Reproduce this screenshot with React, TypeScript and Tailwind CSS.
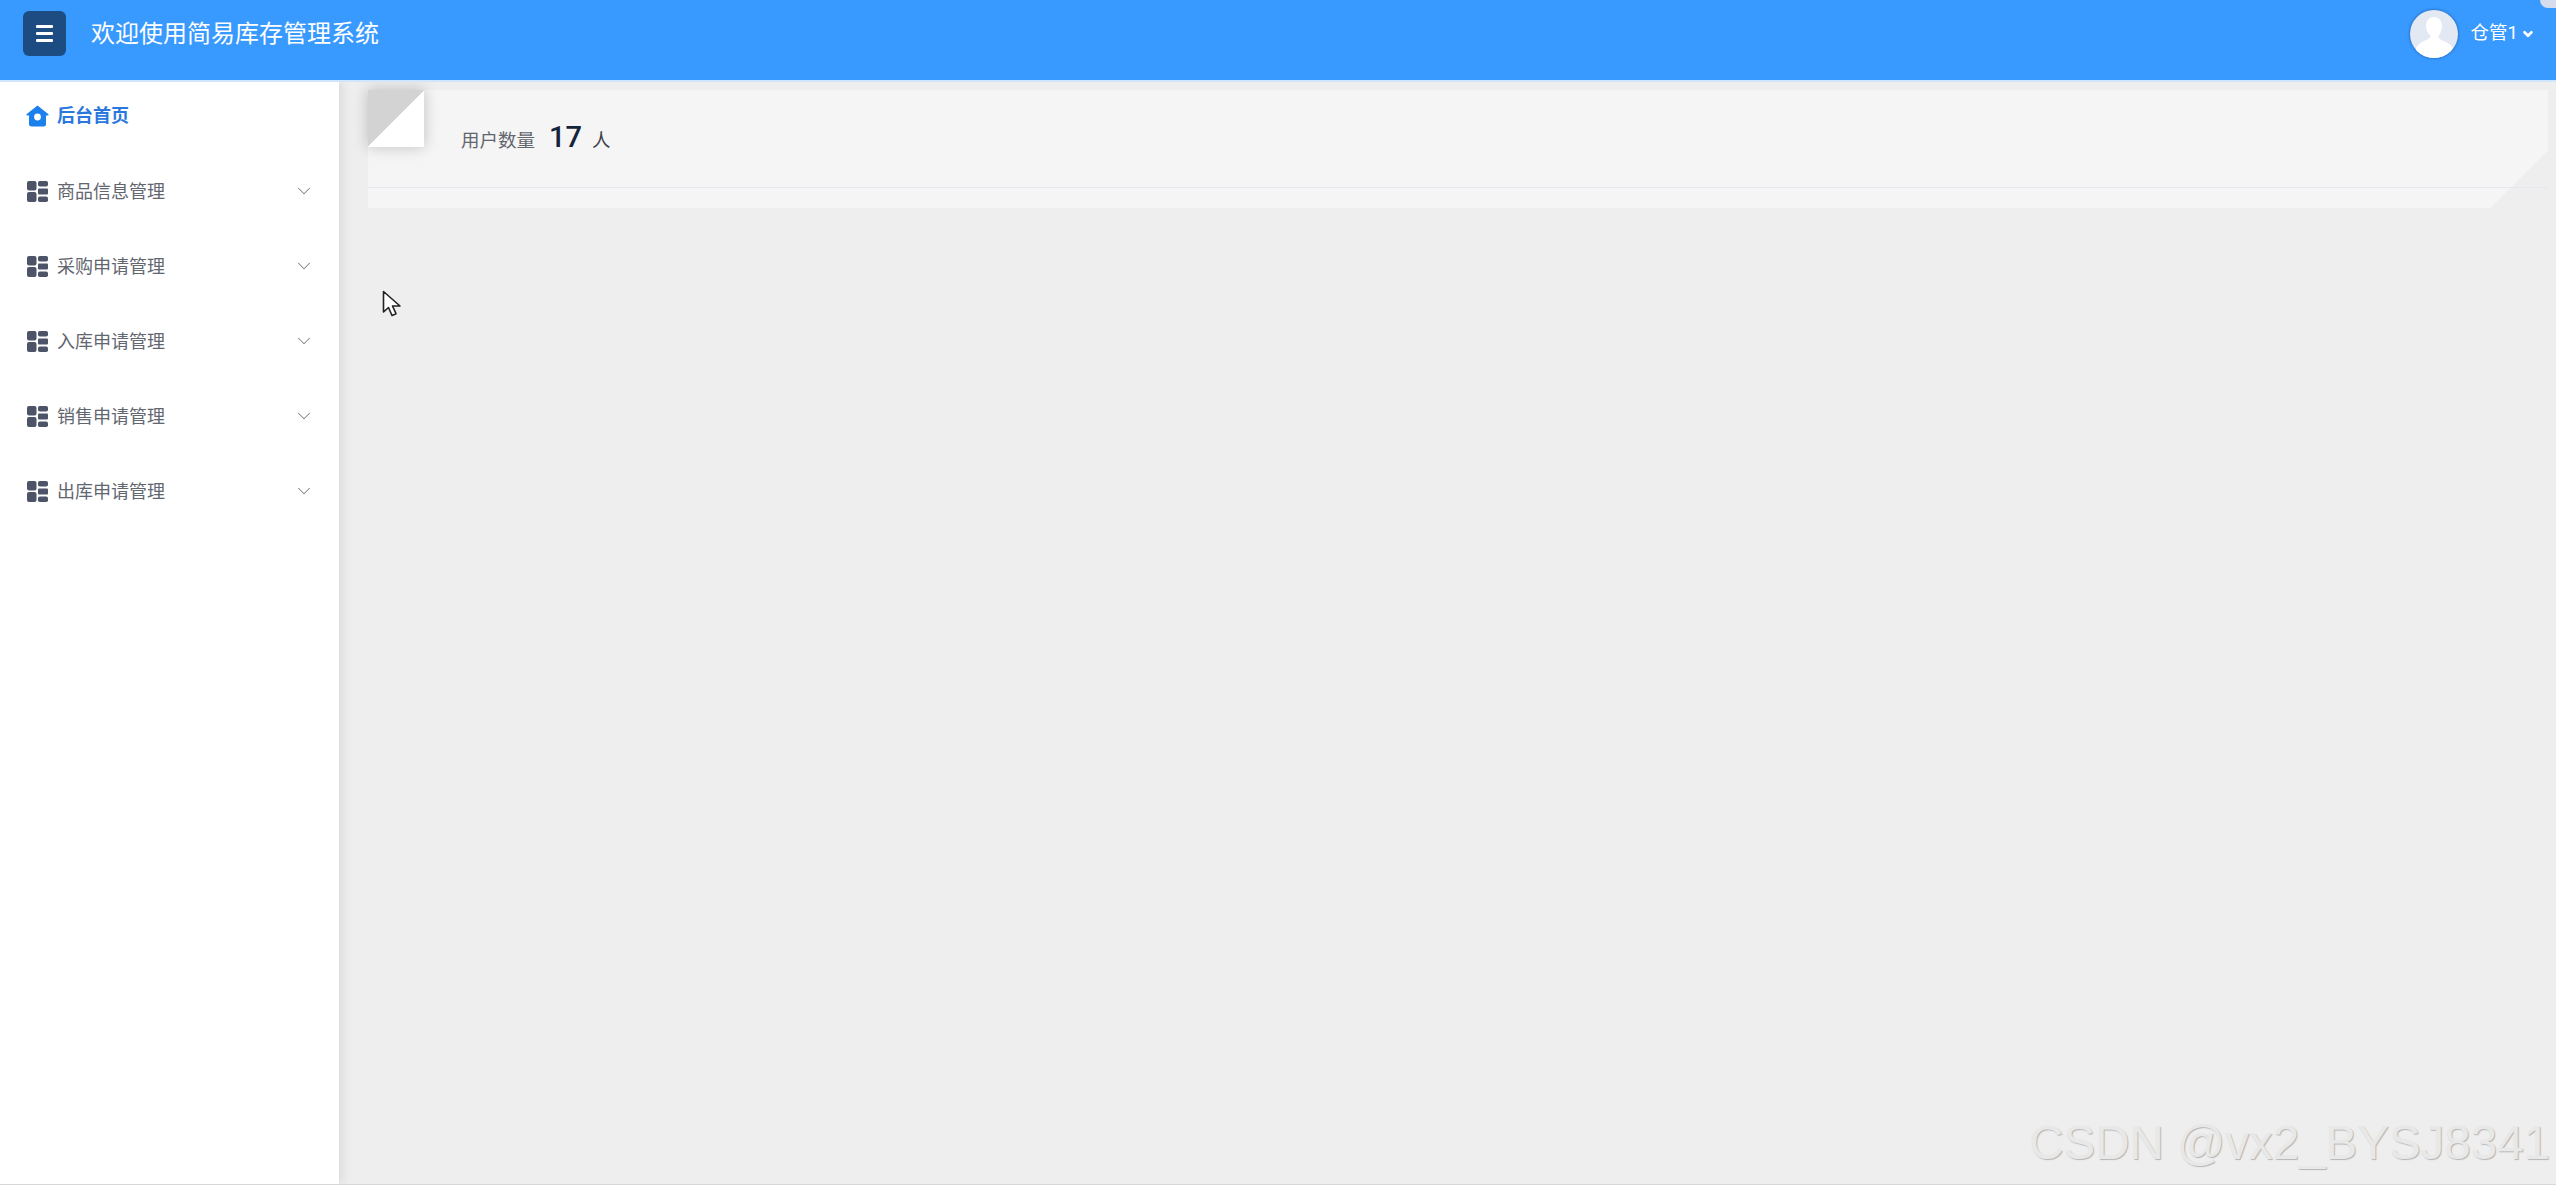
import React from 'react';
import { ChevronDown } from 'lucide-react';

const menus = ['商品信息管理', '采购申请管理', '入库申请管理', '销售申请管理', '出库申请管理'];

const GridIcon = () => (
  <svg width="21" height="21" viewBox="0 0 21 21" className="shrink-0 fill-[#4d5468]">
    <rect x="0" y="0" width="9.5" height="9.5" rx="2" />
    <rect x="0" y="11" width="9.5" height="10" rx="2" />
    <rect x="11" y="0" width="10" height="5.5" rx="1.8" />
    <rect x="11" y="7.5" width="10" height="6" rx="1" />
    <rect x="11" y="15.5" width="10" height="5.5" rx="1.8" />
  </svg>
);

const HomeIcon = () => (
  <svg width="23" height="22" viewBox="0 0 23 22" className="shrink-0">
    <path d="M11.5 0.5 22.5 9.2 Q23 10.5 21.5 10.5 H20 V19 Q20 21.5 17.5 21.5 H5.5 Q3 21.5 3 19 V10.5 H1.5 Q0 10.5 0.5 9.2 Z" fill="#1b7fec" />
    <circle cx="11.5" cy="12" r="3.4" fill="#fff" />
  </svg>
);

const Avatar = () => (
  <div className="w-[48px] h-[48px] rounded-full bg-[#e3e9f3] overflow-hidden shadow-[0_0_3px_rgba(20,60,110,0.7)]">
    <svg width="48" height="48" viewBox="0 0 48 48">
      <path d="M24 7c5 0 8 4 8 9 0 4-2 8-3.500 10 0 2 1 3 4 4.500 5 2 9 4 11 9.500L43 48H5l.5-8.500c2-5.500 6-7.500 11-9.500 3-1.500 4-2.500 4-4.500C18.500 24 16 20 16 16c0-5 3-9 8-9z" fill="#fff" />
    </svg>
  </div>
);

const Cursor = () => (
  <svg width="20" height="28" viewBox="0 0 20 28" className="absolute left-[382px] top-[290px]">
    <path d="M1.500 1.500V22l5-4.500 3.500 8 4-1.800-3.500-7.700H18Z" fill="#fff" stroke="#222" strokeWidth="1.600" strokeLinejoin="round" />
  </svg>
);

export default function App() {
  return (
    <div className="relative h-screen flex flex-col overflow-hidden bg-[#eeeeee] font-['Roboto','Noto_Sans_CJK_SC',sans-serif] border-b border-[#d8d8d8]">
      <header className="relative h-[82px] shrink-0 flex items-center bg-[#3899ff] border-b-2 border-[#cfe6ff] pl-[23px] pr-[21px] pb-[13px]">
        <button className="w-[43px] h-[45px] rounded-[6px] bg-[#1c4c82] flex flex-col items-center justify-center gap-[4px]">
          <span className="w-[17px] h-[3px] bg-white rounded-[1px]" />
          <span className="w-[17px] h-[3px] bg-white rounded-[1px]" />
          <span className="w-[17px] h-[3px] bg-white rounded-[1px]" />
        </button>
        <h1 className="ml-[25px] text-[24px] leading-none text-white font-normal">欢迎使用简易库存管理系统</h1>
        <div className="ml-auto flex items-center">
          <Avatar />
          <span className="ml-[13px] text-[18.5px] text-white">仓管1</span>
          <ChevronDown size={14} strokeWidth={4.5} className="ml-[3px] text-white" />
        </div>
        <div className="absolute right-0 top-0 w-[16px] h-[8px] rounded-bl-full bg-[#d5dcec]" />
      </header>

      <div className="flex flex-1 min-h-0">
        <aside className="w-[339px] shrink-0 bg-white shadow-[3px_0_10px_rgba(0,0,0,0.09)]">
          <div className="h-[72px] flex items-center pl-[26px] pb-[5px] text-[18px] font-bold text-[#2a78dc]">
            <HomeIcon />
            <span className="ml-[8px]">后台首页</span>
          </div>
          {menus.map((m) => (
            <div key={m} className="h-[75px] flex items-center pl-[27px] pr-[24px] text-[18px] text-[#62666f]">
              <GridIcon />
              <span className="ml-[9px]">{m}</span>
              <ChevronDown size={22} strokeWidth={1.1} className="ml-auto mb-[2px] text-[#7d818a]" />
            </div>
          ))}
        </aside>

        <main className="flex-1 pl-[29px] pr-[8px] pt-[8px]">
          <div className="h-[118px] bg-[linear-gradient(-45deg,transparent_41px,#f5f5f5_41px)]">
            <div className="h-[98px] flex border-b border-[#e6e8f0]">
              <div className="w-[56px] h-[57px] bg-[linear-gradient(135deg,#d3d3d3_50%,#ffffff_50%)] shadow-[0_0_14px_rgba(0,0,0,0.22)]" />
              <div className="ml-[37px] pt-[33px] flex items-baseline h-fit text-[18.5px] text-[#62666f]">
                <span>用户数量</span>
                <span className="ml-[14px] text-[29px] font-medium leading-none text-[#15243d]">17</span>
                <span className="ml-[10px] text-[#3b3f48]">人</span>
              </div>
            </div>
          </div>
        </main>
      </div>

      <Cursor />
      <div className="absolute right-[6px] bottom-[18px] text-[47.5px] leading-none font-['Liberation_Sans',sans-serif] text-[#e8e8e8] [text-shadow:1px_1px_1px_#b4b4b4]">
        CSDN @vx2_BYSJ8341
      </div>
    </div>
  );
}
